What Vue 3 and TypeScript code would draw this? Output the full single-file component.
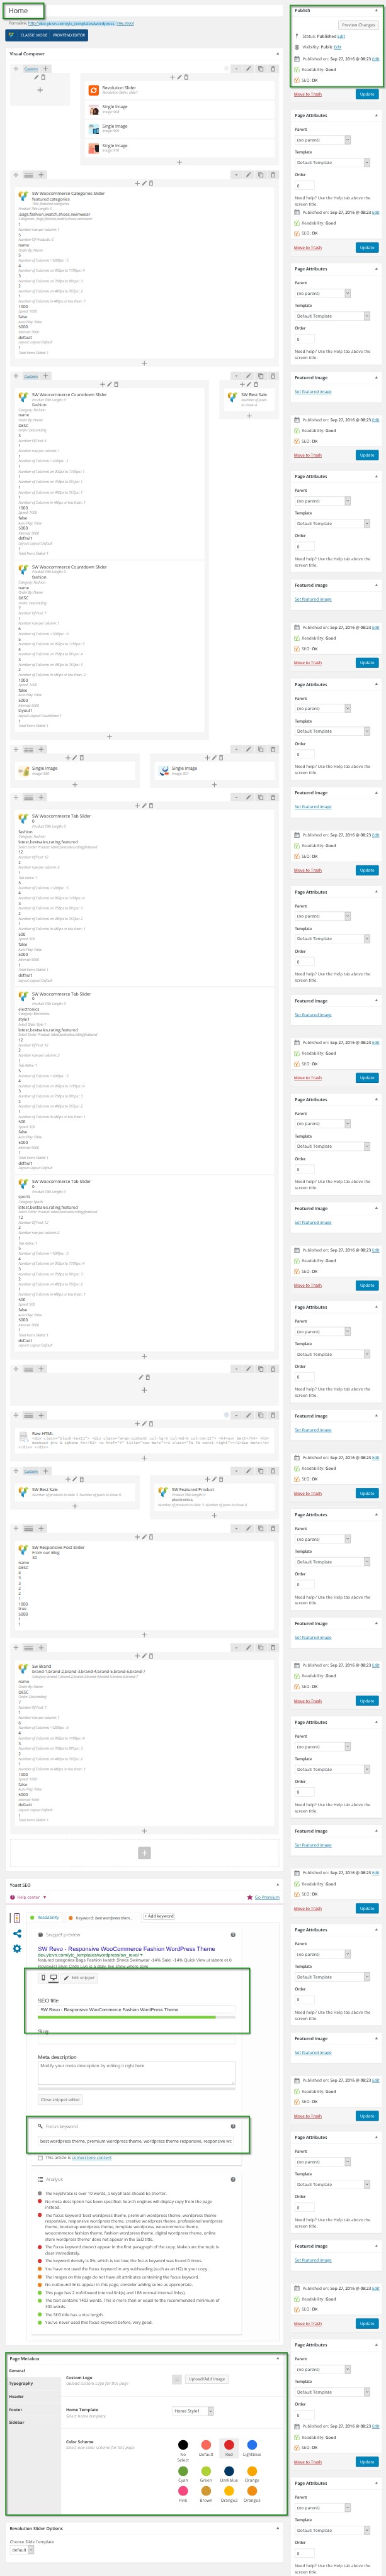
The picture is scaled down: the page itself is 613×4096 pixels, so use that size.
<script setup lang="ts">
import { computed, defineComponent, h } from 'vue'

interface Line { text: string; meta?: boolean }
interface Element { icon: string; title: string; lines?: Line[]; code?: string[]; minHeight?: number }
interface Column { width: number; elements: Element[] }
interface Row { layout: 'custom' | 'single' | 'double'; dot?: string; columns: Column[] }

const v = (text: string): Line => ({ text })
const m = (text: string): Line => ({ text, meta: true })
const pair = (value: string | number, meta: string): Line[] => [v(String(value)), m(`${meta}: ${value}`)]

const columnCounts = (a: number, b: number, c: number, d: number, e: number): Line[] => [
  ...pair(a, 'Number of Columns >1200px: '),
  ...pair(b, 'Number of Columns on 992px to 1199px:'),
  ...pair(c, 'Number of Columns on 768px to 991px:'),
  ...pair(d, 'Number of Columns on 480px to 767px:'),
  ...pair(e, 'Number of Columns in 480px or less than:'),
]
const playback = (speed: number): Line[] => [
  ...pair(speed, 'Speed'), v('false'), m('Auto Play: False'), ...pair(5000, 'Interval'),
]
const byName: Line[] = [v('name'), m('Order By: Name')]
const descending: Line[] = [v('DESC'), m('Order: Descending')]
const layoutDefault: Line[] = [v('default'), m('Layout: Layout Default')]

const countdown = (posts: number, counts: Line[], layout: Line[]): Element => ({
  icon: 'vc',
  title: 'SW Woocommerce Countdown Slider',
  lines: [
    m('Product Title Length: 0'), v('fashion'), m('Category: Fashion'), ...byName, ...descending,
    ...pair(posts, 'Number Of Post'), ...pair(1, 'Number row per column'), ...counts, ...playback(1000),
    ...layout, ...pair(1, 'Total Items Slided'),
  ],
})
const tabSlider = (slug: string, name: string, extra: Line[] = []): Element => ({
  icon: 'vc',
  title: 'SW Woocommerce Tab Slider',
  lines: [
    v('0'), m('Product Title Length: 0'), v(slug), m(`Category: ${name}`), ...extra,
    ...pair('latest,bestsales,rating,featured', 'Select Order Product'), ...pair(12, 'Number Of Post'),
    ...pair(2, 'Number row per column'), ...pair(1, 'Tab Active'), ...columnCounts(5, 4, 3, 2, 1),
    ...playback(500), ...pair(1, 'Total Items Slided'), ...layoutDefault,
  ],
})
const image = (id: number): Element => ({ icon: `img${id}`, title: 'Single Image', lines: [m(`Image: ${id}`)] })

const rows: Row[] = [
  {
    layout: 'custom', dot: '#f0f0f0',
    columns: [
      { width: 182, elements: [] },
      {
        width: 605,
        elements: [
          { icon: 'rev', title: 'Revolution Slider', lines: [m('Revolution Slider: slide1')] },
          image(908), image(909), image(910),
        ],
      },
    ],
  },
  {
    layout: 'single',
    columns: [{
      width: 817.6,
      elements: [{
        icon: 'vc',
        title: 'SW Woocommerce Categories Slider',
        lines: [
          v('featured categories'), m('Title: featured categories'), m('Product Title Length: 0'),
          ...pair(',bags,fashion,iwatch,shoes,swimwear', 'Categories'), ...pair(1, 'Number row per column'),
          ...pair(5, 'Number Of Products'), ...byName, ...columnCounts(5, 4, 3, 2, 1), ...playback(1000),
          ...layoutDefault, ...pair(1, 'Total Items Slided'),
        ],
      }],
    }],
  },
  {
    layout: 'custom',
    columns: [
      {
        width: 605,
        elements: [
          countdown(3, columnCounts(1, 1, 1, 1, 1), layoutDefault),
          countdown(7, columnCounts(6, 5, 4, 3, 2), [v('layout1'), m('Layout: Layout Countdown 1')]),
        ],
      },
      {
        width: 182,
        elements: [{ icon: 'vc', title: 'SW Best Sale', lines: [m('Number of posts'), m('to show: 4')], minHeight: 69 }],
      },
    ],
  },
  { layout: 'double', columns: [{ width: 394.4, elements: [image(950)] }, { width: 393.4, elements: [image(951)] }] },
  {
    layout: 'single',
    columns: [{
      width: 817.6,
      elements: [
        tabSlider('fashion', 'Fashion'),
        tabSlider('electronics', 'Electronics', [v('style1'), m('Select Style: Style 1')]),
        tabSlider('sports', 'Sports'),
      ],
    }],
  },
  { layout: 'single', columns: [{ width: 817.6, elements: [] }] },
  {
    layout: 'single', dot: '#dde3ea',
    columns: [{
      width: 817.6,
      elements: [{
        icon: 'html',
        title: 'Raw HTML',
        minHeight: 78,
        code: [
          '<div class="block-text1"> <div class="wrap-content col-lg-6 col-md-6 col-sm-12"> <h4>our best</h4> <h3>',
          'macbook pro & iphone 5s</h3> <a href="#" title="see more"><i class="fa fa-caret-right"></i>See more</a>',
          '</div> </div>',
        ],
      }],
    }],
  },
  {
    layout: 'custom',
    columns: [
      { width: 394.4, elements: [{ icon: 'vc', title: 'SW Best Sale', lines: [m('Number of products to slide: 3  Number of posts to show: 6')] }] },
      {
        width: 393.4,
        elements: [{
          icon: 'vc', title: 'SW Featured Product', minHeight: 84.2,
          lines: [m('Product Title Length: 0'), v('electronics'), m('Number of products to slide: 3  Number of posts to show: 6')],
        }],
      },
    ],
  },
  {
    layout: 'single',
    columns: [{
      width: 817.6,
      elements: [{
        icon: 'vc',
        title: 'SW Responsive Post Slider',
        minHeight: 271.6,
        lines: ['From our Blog', '30', 'name', 'DESC', '4', '3', '3', '2', '2', '1', '1000', 'true', '5000', '1', '1'].map(v),
      }],
    }],
  },
  {
    layout: 'single',
    columns: [{
      width: 817.6,
      elements: [{
        icon: 'vc',
        title: 'Sw Brand',
        lines: [
          ...pair('brand-1,brand-2,brand-3,brand-4,brand-5,brand-6,brand-7', 'Category'), ...byName, ...descending,
          ...pair(7, 'Number Of Post'), ...pair(1, 'Number row per column'), ...columnCounts(6, 4, 3, 2, 1),
          ...playback(1000), ...layoutDefault, ...pair(1, 'Total Items Slided'),
        ],
      }],
    }],
  },
]

/* Visible height of every stacked sidebar segment */
const segments: number[] = [467, ...Array<number>(10).fill(632), 421, 469]

const analysis: { color: string; text: string[] }[] = [
  { color: '#888', text: ['The keyphrase is over 10 words, a keyphrase should be shorter.'] },
  { color: '#dc3232', text: ['No meta description has been specified. Search engines will display copy from the page', 'instead.'] },
  {
    color: '#dc3232',
    text: [
      "The focus keyword 'best wordpress theme, premium wordpress theme, wordpress theme",
      'responsive, responsive wordpress theme, creative wordpress theme, professional wordpress',
      'theme, bootstrap wordpress theme, template wordpress, woocommerce theme,',
      'woocommerce fashion theme, fashion wordpress theme, digital wordpress theme, online',
      "store wordpress theme' does not appear in the SEO title.",
    ],
  },
  { color: '#dc3232', text: ["The focus keyword doesn't appear in the first paragraph of the copy. Make sure the topic is", 'clear immediately.'] },
  { color: '#dc3232', text: ['The keyword density is 0%, which is too low; the focus keyword was found 0 times.'] },
  { color: '#ee7c1b', text: ['You have not used the focus keyword in any subheading (such as an H2) in your copy.'] },
  { color: '#ee7c1b', text: ['The images on this page do not have alt attributes containing the focus keyword.'] },
  { color: '#ee7c1b', text: ['No outbound links appear in this page, consider adding some as appropriate.'] },
  { color: '#7ad03a', text: ['This page has 2 nofollowed internal link(s) and 188 normal internal link(s).'] },
  { color: '#7ad03a', text: ['The text contains 1403 words. This is more than or equal to the recommended minimum of', '300 words.'] },
  { color: '#7ad03a', text: ['The SEO title has a nice length.'] },
  { color: '#7ad03a', text: ["You've never used this focus keyword before, very good."] },
]

const swatches: { name: string; color: string }[] = [
  { name: 'No Select', color: '#000' }, { name: 'Default', color: '#f9695a' }, { name: 'Red', color: '#dd2727' },
  { name: 'Lightblue', color: '#2672ee' }, { name: 'Cyan', color: '#689f38' }, { name: 'Green', color: '#afd136' },
  { name: 'Darkblue', color: '#013763' }, { name: 'Orange', color: '#f9a500' }, { name: 'Pink', color: '#f5487f' },
  { name: 'Brown', color: '#d09934' }, { name: 'Orange2', color: '#ffb900' }, { name: 'Orange3', color: '#f08d13' },
]

/* Letter spacing that brings a sample line of each text style to its intended width */
const canvas = document.createElement('canvas').getContext('2d')
const track = (font: string, sample: string, width: number): string => {
  if (!canvas) return '0px'
  canvas.font = `${font} "Open Sans"`
  return `${((width - canvas.measureText(sample).width) / sample.length).toFixed(3)}px`
}
const tracking = computed(() => ({
  '--track-body': track('400 12.4px', 'Need help? Use the Help tab above the', 230.6),
  '--track-list': track('400 12.4px', "The focus keyword 'best wordpress theme, premium wordpress theme, wordpress theme", 520.5),
  '--track-value': track('400 12.4px', 'featured categories', 113.8),
  '--track-meta': track('italic 400 11.4px', 'Categories: ,bags,fashion,iwatch,shoes,swimwear', 224.6),
  '--track-note': track('italic 400 12.6px', 'Upload custom Logo for this page', 189.6),
  '--track-title': track('400 13.2px', 'SW Woocommerce Categories Slider', 221),
  '--track-head': track('600 13.2px', 'Revolution Slider Options', 161.7),
  '--track-strong': track('600 12.4px', 'Sep 27, 2016 @ 08:23', 124),
  '--track-bold': track('700 12.4px', 'Home Template', 98),
  '--track-caps': track('400 11.6px', 'FRONTEND EDITOR', 96.8),
  '--track-input': track('400 13.2px', 'best wordpress theme, premium wordpress theme, wordpress theme responsive, responsive wc', 582),
  '--track-panel': track('300 15px', 'Snippet preview', 104),
}))

/* Icon set: each entry holds a view box and its coloured shapes */
type Shape = [string, string, string?]
const icons: Record<string, { box: string; shapes: Shape[] }> = {
  plus: { box: '0 0 16 16', shapes: [['M8 .5V15.5M.5 8H15.5', 'none', '#8a8a8a']] },
  pencil: { box: '0 0 16 16', shapes: [['M1 15l1-4.2 7.8-8.3 3 2.9-7.7 8.4zM10.6 1.7l1.2-1.3q1-.7 1.9.2l1 1q.9 1-.1 1.9l-1.1 1.2z', '#8a8a8a']] },
  trash: { box: '0 0 16 16', shapes: [['M2.5 2.2H13.5M6 1.2H10', 'none', '#8a8a8a'], ['M4 5V14.6H12V5Z', 'none', '#8a8a8a']] },
  copy: { box: '0 0 16 16', shapes: [['M1.6 12V1H11', 'none', '#8a8a8a'], ['M5 4.2H14V15H5Z', 'none', '#8a8a8a']] },
  move: { box: '0 0 16 16', shapes: [['M8 2V14M2 8H14', 'none', '#8a8a8a'], ['M8 0l2.6 3.4H5.4zM8 16l2.6-3.4H5.4zM0 8l3.4-2.6v5.2zM16 8l-3.4-2.6v5.2z', '#8a8a8a']] },
  vc: {
    box: '0 0 32 32',
    shapes: [
      ['M8.6 0L16 4 8.6 8.2 1 4z', '#ffc83d'], ['M1 4l7.4 4.2v8.6L7 19 1 15.6z', '#c9971c'],
      ['M24.4 0L31.6 4 24.4 8.4 17 4z', '#b3d54a'], ['M17 4l7.4 4.4v8L20 19l-3-3z', '#85a430'],
      ['M16.4 12.6L24 17l-7.4 4.6L9 17z', '#3fbaf2'], ['M9 17l7.6 4.6V31L9 27z', '#2086b4'],
    ],
  },
  rev: {
    box: '0 0 32 32',
    shapes: [
      ['M6 0H26Q32 0 32 6V26Q32 32 26 32H6Q0 32 0 26V6Q0 0 6 0Z', '#ff5b02'],
      ['M9.2 18.500Q7.800 12 13 9.700 17 8.300 20.500 10.800M22.800 13.500Q24.200 20 19 22.300 15 23.700 11.500 21.200', 'none', '#fff'],
      ['M24.500 6.500V14.500L17 13.600zM7.500 25.500V17.500L15 18.400z', '#fff'],
    ],
  },
  html: {
    box: '0 0 32 32',
    shapes: [
      ['M3 0H21L27 6V30H3Z', '#e4e4e4'], ['M21 0l6 6h-6z', '#cfcfcf'],
      ['M13 23h18v9H13z', '#fff'], ['M20 24l-4 4 4 4M26 24l4 4-4 4', 'none', '#3f8cf0'],
    ],
  },
  img908: {
    box: '0 0 32 32',
    shapes: [
      ['M0 0H32V32H0Z', '#fdeff2'], ['M1 4H31V5.500H1Z', '#6a5a60'], ['M8 7.500H20V8.500H8Z', '#f2a17c'],
      ['M6 32Q3 20 8 12q4-4 8 1l2 19z', '#b98b62'], ['M15 32Q11 20 17 13q6-5 12 1 4 6 0 13l2 5z', '#3c2620'],
      ['M8 15q3-2 5 1l1 7-3 3-4-4z', '#efc7ae'], ['M17 17q4-2 5 3l-1 6-4 1z', '#a3694e'], ['M5 32l3-7 5 3 2 4z', '#e9d6cb'],
    ],
  },
  img909: {
    box: '0 0 32 32',
    shapes: [
      ['M0 0H32V32H0Z', '#cdf1f8'], ['M4 4.500H14M1 7.800H17', 'none', '#5a7078'], ['M0 12H14', 'none', '#f0a06a'],
      ['M14 15H32V30H14Z', '#2a3b4e'], ['M16 17H32V28H16Z', '#3aa5d8'], ['M24 14H32V31H24Z', '#1b2a3a'], ['M25 16H32V28H25Z', '#6fb5c9'],
    ],
  },
  img910: {
    box: '0 0 32 32',
    shapes: [
      ['M0 0H32V32H0Z', '#f9b08f'], ['M0 20L16 14 24 32H0Z', '#fb7d6d'], ['M1 11.500H13M0 15.500H18', 'none', '#b1685a'],
      ['M20 6H32V27H22Q20 27 20 25Z', '#1b2226'], ['M16 25l4-7 2 9-3 5z', '#f2cbb8'],
    ],
  },
  img950: {
    box: '0 0 32 32',
    shapes: [
      ['M0 0H32V32H0Z', '#fdf5e6'], ['M0 16H14', 'none', '#55504a'], ['M1 12.500H10M2 20.500H9', 'none', '#e6b58c'],
      ['M16 32Q14 22 22 8l6-4 4 6v18l-6 4z', '#d8c24a'], ['M20 26q0-8 6-14l4 8-5 10z', '#9aa66a'], ['M24 10l4-3 3 5-4 4z', '#e9e2a0'],
      ['M27 6q3-3 5-1v6q-4 0-5-5z', '#f0561f'],
    ],
  },
  img951: {
    box: '0 0 32 32',
    shapes: [
      ['M0 0H32V32H0Z', '#e4f6fa'], ['M13 10q2 8 7 8 8 0 9-8M20 3l-6 7M29 2l1 9', 'none', '#3b6aa8'],
      ['M13 10q5 1 7 5 4-5 9-5 1 7-6 8-9 1-10-8z', '#3b6aa8'], ['M5 20q6 2 13 7l-3 4Q6 28 5 20z', '#30518c'],
      ['M20 21H32V27H20Z', '#f0491f'], ['M15 13l4 3-2 1zM8 22l5 3-2 1z', '#d87a7a'],
    ],
  },
  pin: { box: '0 0 16 16', shapes: [['M8 0q3.200 0 3.200 3.300 0 3-2.200 3.900v7L8 16l-1-1.800v-7Q4.800 6.300 4.800 3.300 4.800 0 8 0z', '#82878c']] },
  eye: {
    box: '0 0 20 20',
    shapes: [
      ['M10 2.200A7.800 7.800 0 1 0 10 17.800 7.800 7.800 0 1 0 10 2.200Z', '#82878c'],
      ['M10 4.600Q3.500 5.500 2.500 10q1 4.500 7.500 5.400 6.500-.9 7.500-5.400Q16.500 5.500 10 4.600Z', '#fff'],
      ['M10 5.300A4.600 4.600 0 1 0 10 14.700 4.600 4.600 0 1 0 10 5.300Z', '#82878c'], ['M9.500 7h2v3h-2z', '#fff'],
    ],
  },
  eyedark: {
    box: '0 0 16 16',
    shapes: [
      ['M8 .8A7.200 7.200 0 1 0 8 15.200 7.200 7.200 0 1 0 8 .8Z', '#555'], ['M8 2.200A5.800 5.800 0 1 0 8 13.800 5.800 5.800 0 1 0 8 2.200Z', '#fff'],
      ['M8 3A5 5 0 1 0 8 13 5 5 0 1 0 8 3Z', '#555'], ['M7 4.500h2v2H7z', '#fff'],
    ],
  },
  calendar: {
    box: '0 0 18 18',
    shapes: [['M1 3H4V0.500H6V3H8V0.500H10V3H12V0.500H14V3H17V17H1Z', '#82878c'], ['M2.500 7H15.500V15.500H2.500Z', '#fff'], ['M5.500 8V14.500M9 8V14.500M12.500 8V14.500', 'none', '#82878c']],
  },
  yoastGreen: { box: '0 0 18 18', shapes: [['M11 2.500H3Q1.200 2.500 1.200 4.500V14.500Q1.200 16 3 16H16.500V7', 'none', '#a5dd7f'], ['M4.500 6l3.600 6.200L14.500.5', 'none', '#7ad03a'], ['M8.300 11.500L5.800 17', 'none', '#7ad03a']] },
  yoastOrange: { box: '0 0 18 18', shapes: [['M11 2.500H3Q1.200 2.500 1.200 4.500V14.500Q1.200 16 3 16H16.500V7', 'none', '#f4b27d'], ['M4.500 6l3.600 6.200L14.500.5', 'none', '#ee7c1b'], ['M8.300 11.500L5.800 17', 'none', '#ee7c1b']] },
  star: { box: '0 0 18 18', shapes: [['M9 0l2.300 6H18l-4.600 4.200L15.500 17 9 14.200 2.500 17l2.100-6.800L0 6h6.700z', '#a4286a']] },
  share: { box: '0 0 24 24', shapes: [['M19 4.500L6 12l13 7.500', 'none', '#0073aa'], ['M19 0a4.600 4.600 0 1 0 .1 0zM5 7.400a4.600 4.600 0 1 0 .1 0zM19 14.800a4.600 4.600 0 1 0 .1 0z', '#0073aa']] },
  gear: {
    box: '0 0 26 26',
    shapes: [
      ['M11 0h4l.6 3.600 2.600 1.100 3-2.100 2.800 2.800-2.100 3 1.100 2.600L26 11v4l-3 .6-1.100 2.600 2.100 3-2.800 2.800-3-2.100-2.600 1.100L15 26h-4l-.6-3-2.600-1.100-3 2.100L2 21.200l2.100-3L3 15.600 0 15v-4l3-.6 1.100-2.600-2.100-3L4.800 2l3 2.100 2.600-.9z', '#0073aa'],
      ['M13 8a5 5 0 1 0 .1 0z', '#fff'],
    ],
  },
  phone: { box: '0 0 12 18', shapes: [['M2.500 1.500H9.500V16.500H2.500Z', 'none', '#555'], ['M2 13.500H10V17H2ZM2 1H10V3H2Z', '#555']] },
  desktop: { box: '0 0 20 18', shapes: [['M1.500 1.500H18.500V12.500H1.500Z', 'none', '#555'], ['M1 11H19V13.500H1ZM8 13.500h4v2.200h2.500v1.300H5.500v-1.300H8z', '#555']] },
  edit: { box: '0 0 16 16', shapes: [['M1 15.500l.8-5L11 2.500l3 3L5.800 14zM11.800 1.700l1.500-1.400 2.500 2.700-1.300 1.600z', '#555']] },
  key: { box: '0 0 16 16', shapes: [['M5 1.500a3.500 3.500 0 1 0 .1 0zM7.500 7.500l7 6.500M10.500 10.500l-1 2M12.500 12l-1 2.300', 'none', '#555']] },
  list: { box: '0 0 16 14', shapes: [['M0 1.200H3M0 5H3M0 8.800H3M0 12.600H3M5 1.200H16M5 5H16M5 8.800H16M5 12.600H16', 'none', '#555']] },
  picture: { box: '0 0 12 12', shapes: [['M.5 1.500H11.500V10.500H.5Z', 'none', '#c0c4c8'], ['M1.500 9.500l3-4 2 2 1.500-2 2.500 4z', '#c0c4c8']] },
}
const Icon = defineComponent({
  props: { name: { type: String, required: true }, size: { type: Number, default: 16 }, weight: { type: Number, default: 2 } },
  setup(props) {
    return () => {
      const icon = icons[props.name]
      const [, , bw, bh] = icon.box.split(' ').map(Number)
      return h(
        'svg',
        { viewBox: icon.box, width: props.size, height: (props.size * bh) / bw },
        icon.shapes.map(([d, fill, stroke]) => h('path', { d, fill, stroke, 'stroke-width': stroke ? props.weight : 0 })),
      )
    }
  },
})
const Dropdown = defineComponent({
  props: { label: { type: String, required: true } },
  setup(props) {
    return () => [
      h('span', { class: 'dd-label' }, props.label),
      h('span', { class: 'dd-arrow' }, [h('svg', { viewBox: '0 0 10 8', width: 9, height: 7 }, [h('path', { d: 'M1 1.500L5 6L9 1.500', fill: 'none', stroke: '#444', 'stroke-width': 1.6 })])]),
    ]
  },
})
</script>

<template>
  <div class="viewport" :style="tracking">
    <div class="page">
      <main class="main">
        <div class="title-input">Home</div>
        <p class="permalink">
          Permalink: <a>http://<span class="masked">dev.ytcvn.com/ytc_templates/wordpress</span>/sw_revo/</a>
        </p>
        <div class="mode-switch">
          <span class="mode-logo"><Icon name="vc" :size="17" /></span>
          <span class="mode classic">CLASSIC MODE</span>
          <span class="mode frontend">FRONTEND EDITOR</span>
        </div>

        <section class="box composer">
          <header class="box-head"><h2>Visual Composer</h2><i class="toggle" /></header>
          <div class="rows">
            <div v-for="(row, r) in rows" :key="r" class="row">
              <div class="row-controls">
                <span class="tab drag"><Icon name="move" :size="15" :weight="1.6" /></span>
                <span v-if="row.layout === 'custom'" class="tab layout"><a class="custom">Custom</a></span>
                <span v-else class="tab stripes-tab" :class="row.layout"><i class="stripes" /></span>
                <span class="tab"><Icon name="plus" /></span>
                <span class="push" />
                <i v-if="row.dot" class="dot" :style="{ background: row.dot }" />
                <span class="tab"><i class="caret" /></span>
                <span class="tab"><Icon name="pencil" /></span>
                <span class="tab"><Icon name="copy" :size="17" /></span>
                <span class="tab"><Icon name="trash" :size="17" /></span>
              </div>
              <div class="columns">
                <div v-for="(col, c) in row.columns" :key="c" class="column" :class="{ empty: !col.elements.length }" :style="{ width: col.width + 'px' }">
                  <div class="column-controls">
                    <Icon v-if="col.elements.length" name="plus" />
                    <Icon name="pencil" />
                    <Icon name="trash" :size="17" />
                  </div>
                  <div v-if="!col.elements.length" class="empty-add"><Icon name="plus" :size="18" :weight="2.4" /></div>
                  <template v-else>
                    <div class="elements">
                      <article v-for="(el, e) in col.elements" :key="e" class="element" :style="{ minHeight: (el.minHeight ?? 55) + 'px' }">
                        <span class="element-icon">
                          <Icon :name="el.icon" :size="32" :weight="el.icon === 'rev' ? 3 : 1.6" />
                          <small v-if="el.icon === 'html'">HTML</small>
                        </span>
                        <h4>{{ el.title }}</h4>
                        <p v-for="(line, l) in el.lines" :key="l" :class="line.meta ? 'meta' : 'value'">{{ line.text }}</p>
                        <p v-for="(line, l) in el.code" :key="l" class="code">{{ line }}</p>
                      </article>
                    </div>
                    <div class="column-add"><Icon name="plus" /></div>
                  </template>
                </div>
              </div>
            </div>
            <div class="drop-zone"><span><Icon name="plus" :size="18" /></span></div>
          </div>
        </section>

        <section class="box yoast">
          <header class="box-head"><h2>Yoast SEO</h2><i class="toggle" /></header>
          <div class="help-row">
            <b class="question pink">?</b><span>Help center</span><i class="down" />
            <span class="push" /><Icon name="star" :size="18" /><a>Go Premium</a>
          </div>
          <div class="yoast-body">
            <nav class="yoast-nav">
              <div class="light-wrap"><span class="light"><i /><i class="on" /><i /></span></div>
              <Icon name="share" :size="25" :weight="3.4" />
              <Icon name="gear" :size="26" />
            </nav>
            <div class="yoast-content">
              <div class="kw-tabs">
                <span class="kw-tab first"><i class="bullet green" /><a>Readability</a></span>
                <span class="kw-tab active"><i class="bullet orange" /><span>Keyword: <em>best wordpress them...</em></span></span>
                <span class="add-kw">+ Add keyword</span>
              </div>
              <div class="kw-panel">
                <div class="card snippet">
                  <div class="card-head"><Icon name="eyedark" :size="16" /><h3>Snippet preview</h3><b class="question">?</b></div>
                  <p class="s-title">SW Revo - Responsive WooCommerce Fashion WordPress Theme</p>
                  <p class="s-url">dev.ytcvn.com/ytc_templates/wordpress/sw_revo/ <i class="down green-down" /></p>
                  <p class="s-desc">featured categories Bags Fashion Iwatch Shoes Swimwear -14% Sale! -14% Quick View ut labore et 0<br>Review(s) Style Code Live is a daily, live show where style</p>
                  <div class="s-buttons">
                    <span class="btn devices"><span><Icon name="phone" :size="12" /></span><span class="current"><Icon name="desktop" :size="20" /></span></span>
                    <span class="btn edit"><Icon name="edit" :size="15" />Edit snippet</span>
                  </div>
                  <label class="seo-label">SEO title</label>
                  <div class="field">SW Revo - Responsive WooCommerce Fashion WordPress Theme</div>
                  <div class="meter"><i /></div>
                  <label class="slug-label">Slug</label>
                  <div class="field" />
                  <label class="meta-label">Meta description</label>
                  <div class="area">Modify your meta description by editing it right here<i class="grip" /></div>
                  <div class="meter" />
                  <span class="btn close">Close snippet editor</span>
                </div>
                <div class="card focus">
                  <div class="card-head"><Icon name="key" :size="16" /><h3>Focus keyword</h3><b class="question">?</b></div>
                  <div class="kw-field"><span>best wordpress theme, premium wordpress theme, wordpress theme responsive, responsive wc</span></div>
                  <div class="corner"><i /><span>This article is <a>cornerstone content</a></span></div>
                </div>
                <div class="card analysis">
                  <div class="card-head"><Icon name="list" :size="16" /><h3>Analysis</h3><b class="question">?</b></div>
                  <ul>
                    <li v-for="(item, i) in analysis" :key="i">
                      <i class="bullet" :style="{ background: item.color }" />
                      <div><p v-for="(t, k) in item.text" :key="k">{{ t }}</p></div>
                    </li>
                  </ul>
                </div>
              </div>
            </div>
          </div>
        </section>

        <section class="box metabox">
          <header class="box-head"><h2>Page Metabox</h2><i class="toggle" /></header>
          <div class="metabox-body">
            <nav>
              <span class="active">General</span><span>Typography</span><span>Header</span><span>Footer</span><span>Sidebar</span>
            </nav>
            <div class="options">
              <div class="option">
                <div class="option-text"><b>Custom Logo</b><em>Upload custom Logo for this page</em></div>
                <div class="option-field upload">
                  <span class="thumb"><Icon name="picture" :size="12" :weight="1" /></span><span class="btn wp">Upload/Add image</span>
                </div>
              </div>
              <div class="option">
                <div class="option-text"><b>Home Template</b><em>Select home template</em></div>
                <div class="option-field"><div class="dd home-dd"><Dropdown label="Home Style1" /></div></div>
              </div>
              <div class="option last">
                <div class="option-text"><b>Color Scheme</b><em>Select one color scheme for this page</em></div>
                <div class="swatches">
                  <span v-for="s in swatches" :key="s.name" class="swatch" :class="{ picked: s.name === 'Red' }"><i :style="{ background: s.color }" />{{ s.name }}</span>
                </div>
              </div>
            </div>
          </div>
        </section>

        <section class="box revolution">
          <header class="box-head"><h2>Revolution Slider Options</h2><i class="toggle" /></header>
          <p>Choose Slide Template</p>
          <div class="dd slide-dd"><Dropdown label="default" /></div>
        </section>
      </main>

      <aside class="side">
        <div class="publish-top">
          <header class="box-head"><h2>Publish</h2><i class="toggle" /></header>
          <div class="preview-line"><span class="btn wp">Preview Changes</span></div>
          <p class="info"><Icon name="pin" :size="16" /><span>Status: <b>Published</b> <a>Edit</a></span></p>
          <p class="info"><Icon name="eye" :size="20" /><span>Visibility: <b>Public</b> <a>Edit</a></span></p>
        </div>
        <div v-for="(height, i) in segments" :key="i" class="segment" :style="{ height: height + 'px' }">
          <div class="publish-rest">
            <p class="info date"><Icon name="calendar" :size="18" :weight="1.6" /><span>Published on: <b>Sep 27, 2016 @ 08:23</b> <a>Edit</a></span></p>
            <p class="info read"><Icon name="yoastGreen" :size="18" :weight="1.8" /><span>Readability: <b>Good</b></span></p>
            <p class="info seo"><Icon name="yoastOrange" :size="18" :weight="1.8" /><span>SEO: <b>OK</b></span></p>
            <div class="publish-foot"><a>Move to Trash</a><span class="update">Update</span></div>
          </div>
          <section class="box attributes">
            <header class="box-head"><h2>Page Attributes</h2><i class="toggle" /></header>
            <b class="attr">Parent</b>
            <div class="dd parent-dd"><Dropdown label="(no parent)" /></div>
            <b class="attr">Template</b>
            <div class="dd template-dd"><Dropdown label="Default Template" /></div>
            <b class="attr">Order</b>
            <div class="order">0</div>
            <p v-if="height > 421" class="hint">Need help? Use the Help tab above the<br>screen title.</p>
          </section>
          <section v-if="height > 500" class="box featured">
            <header class="box-head"><h2>Featured Image</h2><i class="toggle" /></header>
            <a>Set featured image</a>
          </section>
        </div>
      </aside>

      <div class="mark mark-title" />
      <div class="mark mark-publish" />
      <div class="mark mark-snippet" />
      <div class="mark mark-focus" />
      <div class="mark mark-metabox" />
    </div>
  </div>
</template>

<style>
body { margin: 0; background: #f1f1f1; }
.dd-label { flex: 1; white-space: nowrap; }
.dd-arrow { width: 17px; height: 100%; box-sizing: border-box; border: 1px solid #adadad; background: #e1e1e1; display: flex; align-items: center; justify-content: center; }
</style>

<style scoped>
.viewport { width: 613px; height: 4096px; overflow: hidden; background: #f1f1f1; }
.page {
  position: relative; display: flex; width: 1174px; height: 7842px; overflow: hidden;
  transform: scale(0.52215, 0.52231); transform-origin: 0 0; text-rendering: geometricPrecision;
  font: 12.4px/18px "Open Sans", "Noto Sans", sans-serif; letter-spacing: var(--track-body); color: #444;
}
.page * { box-sizing: border-box; }
.page p, .page h2, .page h3, .page h4, .page ul { margin: 0; padding: 0; font-weight: 400; }
svg { display: block; flex: none; }
a { color: #0073aa; text-decoration: underline; text-underline-offset: 1.5px; }
b { font-weight: 600; }
.push { flex: 1; }

.main { width: 847px; margin: 13px 0 0 16.3px; }
.title-input { height: 38.5px; border: 1px solid #ddd; background: #fff; padding-left: 8.5px; font-size: 21.6px; line-height: 38px; letter-spacing: -0.7px; color: #32373c; }
.page .permalink { height: 20px; line-height: 20px; padding-left: 9.7px; margin-top: 9px; color: #666; white-space: nowrap; letter-spacing: -0.45px; }
.masked { display: inline-block; height: 15px; line-height: 15px; background: #c4dfee; filter: blur(1.3px); vertical-align: middle; width: 237px; letter-spacing: -0.1px; }
.mode-switch { display: flex; width: 252px; height: 36.5px; margin-top: 8.5px; border-radius: 4px; background: #124f82; color: #fff; font-size: 11.6px; line-height: 37px; letter-spacing: var(--track-caps); white-space: nowrap; }
.mode-logo { width: 36px; display: flex; align-items: center; justify-content: center; }
.mode { border-left: 1px solid #2a639a; padding-left: 10px; }
.classic { width: 98px; letter-spacing: -0.02px; }

.box { background: #fff; border: 1px solid #e3e3e3; box-shadow: 0 1px 1px rgba(0, 0, 0, .05); }
.box-head { display: flex; align-items: center; justify-content: space-between; height: 36.5px; padding: 0 13px 0 12.3px; border-bottom: 1px solid #ececec; }
.page .box-head h2 { font-size: 13.2px; font-weight: 600; letter-spacing: var(--track-head); color: #23282d; white-space: nowrap; line-height: 20px; }
.toggle { border: 4.5px solid transparent; border-top: 0; border-bottom: 7px solid #72777c; margin-top: -3px; }

.composer { margin-top: 19.8px; height: 5552.5px; }
.rows { padding: 13.3px 13.4px 0; }
.row { margin-bottom: 15.25px; }
.row-controls { display: flex; gap: 1.4px; height: 26px; }
.tab { width: 35.9px; display: flex; align-items: center; justify-content: center; background: #e6e6e6; border-radius: 2px 2px 0 0; }
.drag { background: #f5f5f5; }
.layout { width: 52px; }
.custom { text-decoration: none; border-bottom: 1px dotted #0073aa; line-height: 15px; margin-top: 3px; letter-spacing: -0.55px; font-size: 12px; }
.stripes-tab { width: 38px; }
.stripes { width: 26px; height: 14px; margin-top: 3px; background: repeating-linear-gradient(#a2a2a2 0 1px, #dcdcdc 1px 2.8px); position: relative; }
.stripes::before { content: ""; position: absolute; inset: 7px 0 0; background: rgba(150, 150, 150, .5); }
.double .stripes::after { content: ""; position: absolute; left: 12.5px; top: 0; width: 1.5px; height: 14px; background: #e6e6e6; }
.caret { border: 4px solid transparent; border-bottom: 0; border-top: 4.5px solid #8a8a8a; margin-top: 2px; }
.dot { width: 16px; height: 16px; border-radius: 50%; margin: 3.5px 2.5px 0 0; }
.columns { display: flex; justify-content: space-between; align-items: flex-start; }
.column { background: #f5f5f5; }
.column.empty { height: 100px; }
.column-controls { display: flex; gap: 4.5px; height: 25.1px; align-items: center; justify-content: center; }
.empty-add { display: flex; justify-content: center; margin-top: 17.5px; }
.elements { padding: 0 14.2px; display: flex; flex-direction: column; gap: 4px; }
.element { background: #fff; border-radius: 2px; padding: 11.6px 11px 9.3px; }
.element-icon { float: left; width: 32px; height: 32px; margin: 0 10px 1.5px 0; position: relative; }
.element-icon small { position: absolute; left: 5px; top: 9px; font: 8px/10px "Liberation Serif", serif; letter-spacing: 0; color: #aaa; }
.element h4 { font-size: 13.2px; line-height: 15.63px; letter-spacing: var(--track-title); color: #333; white-space: nowrap; }
.value { line-height: 15.63px; letter-spacing: var(--track-value); color: #333; white-space: nowrap; }
.meta { font-size: 11.4px; line-height: 15.63px; letter-spacing: var(--track-meta); font-style: italic; color: #999; white-space: pre; }
.code { font: 11.67px/13.1px "Liberation Mono", monospace; letter-spacing: 0; color: #999; white-space: pre; }
.column-add { height: 24.8px; display: flex; justify-content: center; padding-top: 6.5px; }
.drop-zone { height: 83.8px; border: 1px dashed #c6c6c6; display: flex; align-items: center; justify-content: center; }
.drop-zone span { width: 39px; height: 38px; background: #c6c6c6; border-radius: 5px; display: flex; align-items: center; justify-content: center; }
.drop-zone :deep(path) { stroke: #fff; }

.yoast { margin-top: 21px; height: 1422px; }
.help-row { height: 40.8px; display: flex; align-items: center; gap: 7px; padding: 0 12px 0 14px; border-bottom: 1.5px solid #a4286a; color: #a4286a; }
.question { width: 14px; height: 14px; border-radius: 50%; background: #72777c; color: #fff; font-size: 11px; font-weight: 700; line-height: 14px; text-align: center; letter-spacing: 0; }
.pink { background: #a4286a; }
.down { display: inline-block; border: 4px solid transparent; border-bottom: 0; border-top: 7px solid #a4286a; margin-left: 4px; }
.yoast-body { display: flex; padding-top: 26px; }
.yoast-nav { width: 62.7px; display: flex; flex-direction: column; gap: 20px; align-items: center; padding: 1px 0 0 7px; }
.light-wrap { border-left: 2.5px solid #222; padding-left: 10px; margin-left: -13px; height: 30px; }
.light { width: 19px; height: 30px; border: 2px solid #6b3553; border-radius: 5px; display: flex; flex-direction: column; align-items: center; justify-content: center; gap: 1px; }
.light i { width: 7px; height: 7px; border-radius: 50%; background: #c4c4c4; }
.light .on { background: #f99b00; }
.yoast-content { width: 770.5px; }
.kw-tabs { display: flex; height: 29px; }
.kw-tab { display: flex; align-items: center; gap: 10px; padding-left: 11px; border: 1px solid #ddd; border-bottom: 0; background: #fdfdfd; white-space: nowrap; }
.kw-tab a { text-decoration: none; }
.kw-tab.first { width: 112px; margin-right: 5px; background: #fff; }
.kw-tab.active { width: 233px; height: 30px; z-index: 1; }
.kw-tab em { letter-spacing: -0.5px; }
.add-kw { margin: 1px 0 0 6.5px; width: 95px; height: 20px; line-height: 18px; border: 1px solid #ccc; border-radius: 3px; text-align: center; background: #fff; box-shadow: 0 1px 0 #ccc; color: #222; white-space: nowrap; }
.bullet { width: 12px; height: 12px; border-radius: 50%; flex: none; }
.green { background: #7ad03a; }
.orange { background: #ee7c1b; }
.kw-panel { height: 1275px; border: 1px solid #ddd; background: #fdfdfd; padding: 19.3px 14px; }
.card { width: 640.5px; background: #fff; box-shadow: 0 1px 2px rgba(0, 0, 0, .22); padding: 0 19px 0 20.5px; }
.card-head { display: flex; align-items: center; gap: 8.5px; height: 36px; }
.page .card-head h3 { flex: 1; font-size: 15px; color: #555; letter-spacing: var(--track-panel); font-weight: 300; }
.snippet { height: 556.9px; font-family: "Liberation Sans", Arial, sans-serif; letter-spacing: 0; }
.snippet .card-head, .snippet .btn { font-family: "Open Sans", "Noto Sans", sans-serif; }
.page .snippet .s-title { margin-top: 13.5px; font-size: 18px; line-height: 22px; color: #1e0fbe; white-space: nowrap; }
.s-url { font-size: 14px; line-height: 15px; color: #006621; white-space: nowrap; }
.green-down { border-top-color: #006621; border-top-width: 5px; margin: 0 0 2px; }
.page .snippet .s-desc { margin-top: -1px; font-size: 13px; line-height: 19.3px; color: #545454; white-space: nowrap; }
.s-buttons { display: flex; gap: 5px; margin-top: 9.2px; }
.btn { height: 32.6px; display: inline-flex; align-items: center; border: 1px solid #d4d4d4; border-radius: 3px; background: #f7f7f7; color: #555; letter-spacing: var(--track-body); white-space: nowrap; }
.btn.wp { height: 28.5px; padding: 0 10px; border-color: #ccc; box-shadow: 0 1px 0 #ccc; }
.devices { width: 64px; }
.devices span { flex: 1; height: 100%; display: flex; align-items: center; justify-content: center; padding-bottom: 4px; }
.devices .current { border-bottom: 4.5px solid #555; padding: 0; }
.edit { width: 112.5px; padding-left: 9px; gap: 8px; }
.snippet label { display: block; height: 20px; line-height: 20px; font-size: 16px; color: #333; }
.seo-label { margin-top: 43.5px; }
.field { margin-top: 2.6px; height: 25px; line-height: 24px; border: 1px solid #ddd; padding-left: 6.5px; font-size: 14px; color: #32373c; box-shadow: inset 0 1px 2px rgba(0, 0, 0, .07); white-space: nowrap; }
.meter { height: 8px; background: #e5e5e5; margin-top: 8px; }
.meter i { display: block; width: 90%; height: 8px; background: #7ad03a; }
.slug-label { margin-top: 30.3px; }
.meta-label { margin-top: 30.5px; }
.area { position: relative; height: 70.3px; margin-top: 2.5px; border: 1px solid #b5b5b5; padding: 2px 6.5px; font-size: 14px; line-height: 21px; color: #757575; }
.grip { position: absolute; right: 3px; bottom: 2px; width: 8px; height: 8px; background: repeating-linear-gradient(90deg, #bbb 0 2px, #fff 2px 3px); clip-path: polygon(100% 0, 100% 100%, 0 100%); }
.close { width: 137px; justify-content: center; margin-top: 13px; }
.focus { margin-top: 25.3px; height: 137px; }
.kw-field { width: 594.5px; height: 27.3px; margin-top: 13.6px; border: 1px solid #ddd; box-shadow: inset 0 1px 2px rgba(0, 0, 0, .07); padding-left: 6px; font-size: 13.2px; line-height: 26px; letter-spacing: var(--track-input); color: #32373c; white-space: nowrap; }
.corner { display: flex; align-items: center; gap: 9px; margin-top: 28px; height: 20px; }
.corner i { width: 13px; height: 13px; border: 1.3px solid #333; margin-left: 1px; }
.analysis { margin-top: 25.5px; height: 490px; }
.page .analysis ul { padding-top: 15.3px; list-style: none; letter-spacing: var(--track-list); }
.analysis li { display: flex; gap: 10px; margin-bottom: 6px; color: #444; }
.analysis li .bullet { margin-top: 2.5px; }
.analysis p { line-height: 18.2px; white-space: nowrap; }

.metabox { margin-top: 20px; height: 495px; }
.metabox-body { display: flex; height: 457px; }
.metabox nav { width: 168.7px; background: #ededed; display: flex; flex-direction: column; }
.metabox nav span { height: 39.2px; line-height: 40px; border-bottom: 1.2px solid #fff; padding-left: 10px; font-weight: 700; letter-spacing: var(--track-bold); color: #444; }
.metabox nav .active { background: #fff; }
.metabox nav span:last-child { border: 0; }
.options { flex: 1; }
.option { display: flex; height: 97.6px; border-bottom: 1px solid #e7e7e7; padding-left: 15px; }
.option.last { border: 0; height: 260px; }
.option-text { width: 322px; padding-top: 32px; }
.option-text b { display: block; font-weight: 700; letter-spacing: var(--track-bold); line-height: 18px; }
.option-text em { display: block; font-size: 12.6px; line-height: 18.5px; color: #999; letter-spacing: var(--track-note); }
.option-field { padding-top: 30.5px; }
.upload { display: flex; gap: 10px; }
.thumb { width: 30px; height: 30px; background: #e1e1e1; display: flex; align-items: center; justify-content: center; }
.swatches { display: grid; grid-template-columns: repeat(4, 60px); column-gap: 9.95px; align-items: start; align-content: start; padding: 30px 0 0 4px; text-align: center; }
.swatch { padding: 5px 3px 3.2px; line-height: 18.2px; display: flex; flex-direction: column; align-items: center; }
.swatch:first-child { padding-left: 10px; padding-right: 10px; }
.swatch i { width: 30px; height: 30px; border-radius: 50%; margin-bottom: 4.5px; }
.swatch.picked { background: #ededed; }

.revolution { margin-top: 22px; height: 124.5px; }
.page .revolution p { padding: 14px 0 0 12.3px; line-height: 18px; }
.dd { display: flex; height: 28px; align-items: center; border: 1px solid #d8d8d8; box-shadow: inset 0 1px 2px rgba(0, 0, 0, .07); background: #fff; padding-left: 6px; color: #32373c; font-size: 12.8px; }
.slide-dd { width: 73.5px; margin: 1px 0 0 13px; }
.home-dd { width: 126.5px; margin-left: 1px; }

.side { width: 279.5px; margin: 13px 0 0 20px; }
.publish-top { height: 152px; background: #fff; border: 1px solid #e3e3e3; border-bottom: 0; }
.preview-line { display: flex; justify-content: flex-end; padding: 11px 10px 0 0; }
.page .info { display: flex; align-items: center; gap: 8px; height: 34px; padding-left: 10px; color: #444; white-space: nowrap; letter-spacing: var(--track-body); }
.info b { letter-spacing: var(--track-strong); }
.page .preview-line + .info { margin-top: 3.3px; }
.publish-top .info svg { width: 18px; }
.segment { overflow: hidden; }
.publish-rest { border: 1px solid #e3e3e3; border-top: 0; background: #fff; height: 147.5px; box-shadow: 0 1px 1px rgba(0, 0, 0, .05); }
.page .info.date { height: 28.2px; }
.page .info.read { height: 38px; gap: 5.5px; }
.page .info.seo { height: 26.6px; gap: 5.5px; }
.publish-foot { height: 51.5px; margin-top: 2.7px; border-top: 1px solid #ddd; background: #f5f5f5; display: flex; align-items: center; justify-content: space-between; padding: 0 10px; }
.publish-foot a { color: #a00; }
.update { width: 69.5px; height: 31px; border-radius: 3px; background: #0085ba; border: 1px solid #006799; border-bottom-width: 2px; color: #fff; text-align: center; line-height: 30px; }
.attributes { margin-top: 20.7px; height: 310.6px; }
.attr { display: block; height: 18px; line-height: 18px; margin: 15.5px 0 7.5px 12.3px; letter-spacing: -0.55px; }
.parent-dd { width: 170px; margin-left: 12.8px; }
.template-dd { width: 229px; margin-left: 12.8px; }
.order { width: 60px; height: 28px; margin-left: 12.8px; border: 1px solid #ddd; box-shadow: inset 0 1px 2px rgba(0, 0, 0, .07); padding-left: 5.5px; line-height: 29px; color: #32373c; }
.page .attributes .hint { padding: 15px 0 0 12.3px; line-height: 19.8px; white-space: nowrap; }
.featured { margin-top: 20.6px; height: 94.7px; }
.featured > a { display: block; padding: 15px 0 0 12.3px; }

.mark { position: absolute; border: 3.3px solid #008000; box-shadow: 4px 5px 4px rgba(0, 0, 0, .4), inset 4px 5px 4px rgba(0, 0, 0, .35); }
.mark-title { left: 7.5px; top: 8px; width: 127.5px; height: 50px; }
.mark-publish { left: 881px; top: 15px; width: 287px; height: 251px; }
.mark-snippet { left: 72.6px; top: 5990px; width: 688px; height: 201px; }
.mark-focus { left: 79.4px; top: 6441px; width: 681px; height: 115px; }
.mark-metabox { left: 16.4px; top: 7161px; width: 859px; height: 497px; }
</style>
